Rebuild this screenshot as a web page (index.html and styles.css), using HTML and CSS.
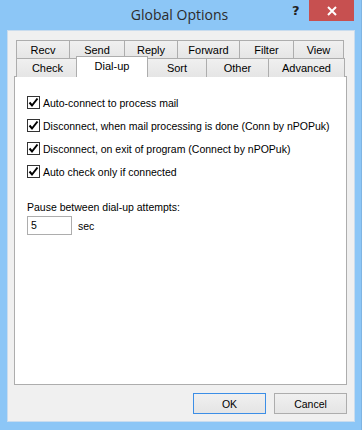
FILE: index.html
```html
<!DOCTYPE html>
<html lang="en">
<head>
    <meta charset="UTF-8">
    <meta name="viewport" content="width=device-width, initial-scale=1.0">
    <title>Global Options</title>
    <link rel="stylesheet" href="styles.css">
</head>
<body>
    <div class="window">
        <div class="titlebar">
            <div class="title">Global Options</div>
            <div class="help">?</div>
            <div class="close">
                <svg width="12" height="10" viewBox="0 0 12 10">
                    <path d="M2 1 L10 9 M10 1 L2 9" stroke="#fff" stroke-width="2"/>
                </svg>
            </div>
        </div>

        <div class="client">
            <div class="tabs">
                <div class="tab-row back">
                    <div class="tab w53">Recv</div>
                    <div class="tab w55">Send</div>
                    <div class="tab w53">Reply</div>
                    <div class="tab w62">Forward</div>
                    <div class="tab w54">Filter</div>
                    <div class="tab w50">View</div>
                </div>
                <div class="tab-row front">
                    <div class="tab w62">Check</div>
                    <div class="tab w67 active">Dial-up</div>
                    <div class="tab w59">Sort</div>
                    <div class="tab w62">Other</div>
                    <div class="tab w77">Advanced</div>
                </div>
            </div>

            <div class="panel">
                <label class="check-row">
                    <span class="box"><svg width="11" height="11" viewBox="0 0 11 11"><path d="M1.5 5.5 L4 8.5 L9.5 1.5" fill="none" stroke="#000" stroke-width="2"/></svg></span>
                    <span>Auto-connect to process mail</span>
                </label>
                <label class="check-row">
                    <span class="box"><svg width="11" height="11" viewBox="0 0 11 11"><path d="M1.5 5.5 L4 8.5 L9.5 1.5" fill="none" stroke="#000" stroke-width="2"/></svg></span>
                    <span>Disconnect, when mail processing is done (Conn by nPOPuk)</span>
                </label>
                <label class="check-row">
                    <span class="box"><svg width="11" height="11" viewBox="0 0 11 11"><path d="M1.5 5.5 L4 8.5 L9.5 1.5" fill="none" stroke="#000" stroke-width="2"/></svg></span>
                    <span>Disconnect, on exit of program (Connect by nPOPuk)</span>
                </label>
                <label class="check-row">
                    <span class="box"><svg width="11" height="11" viewBox="0 0 11 11"><path d="M1.5 5.5 L4 8.5 L9.5 1.5" fill="none" stroke="#000" stroke-width="2"/></svg></span>
                    <span>Auto check only if connected</span>
                </label>

                <div class="pause-label">Pause between dial-up attempts:</div>
                <div class="pause-row">
                    <div class="field">5</div>
                    <span>sec</span>
                </div>
            </div>

            <div class="buttons">
                <button class="btn default">OK</button>
                <button class="btn">Cancel</button>
            </div>
        </div>
    </div>
</body>
</html>
```

FILE: styles.css
```css
:root {
    --frame: #8cc6f6;
    --face: #f0f0f0;
    --line: #adadad;
    --text: #000;
}

body {
    margin: 0;
    padding: 0;
    background: var(--frame);
    font-family: 'Liberation Sans', Arial, sans-serif;
    font-size: 11px;
    color: var(--text);
}

.window {
    width: 362px;
    height: 430px;
    box-sizing: border-box;
    border-right: 1px solid #7fb4e2;
}

.titlebar {
    height: 30px;
    display: flex;
    align-items: flex-start;
}

.title {
    flex: 1;
    padding-left: 67px;
    text-align: center;
    font-family: 'Open Sans', sans-serif;
    font-size: 14px;
    line-height: 30px;
    color: #2b2b2b;
}

.help {
    width: 10px;
    font-family: 'DejaVu Sans', sans-serif;
    font-weight: bold;
    font-size: 13px;
    line-height: 21px;
    color: #222;
    margin-right: 7px;
}

.close {
    width: 45px;
    height: 21px;
    background: #c75050;
    display: flex;
    align-items: center;
    justify-content: center;
    margin-right: 7px;
}

.client {
    margin-left: 7px;
    width: 348px;
    height: 392px;
    box-sizing: border-box;
    background: var(--face);
    border: 1px solid #c9dcee;
    padding: 9px 0 0 6px;
}

.tabs {
    padding-left: 2px;
}

.tab-row {
    display: flex;
    height: 18px;
}

.tab {
    box-sizing: border-box;
    height: 19px;
    border: 1px solid var(--line);
    border-bottom: none;
    margin-right: -1px;
    background: linear-gradient(#f0f0f0, #e5e5e5);
    text-align: center;
    line-height: 19px;
}

.tab:last-child {
    margin-right: 0;
}

.tab.active {
    position: relative;
    z-index: 1;
    background: #fff;
    height: 21px;
    margin: -2px -2px 0 -2px;
    padding: 0 2px;
    line-height: 19px;
}

.active + .tab {
    margin-left: 1px;
}

.w50 { width: 51px; }
.w53 { width: 54px; }
.w54 { width: 55px; }
.w55 { width: 56px; }
.w59 { width: 60px; }
.w62 { width: 63px; }
.w67 { width: 72px; }
.w77 { width: 77px; }

.panel {
    width: 333px;
    height: 309px;
    box-sizing: border-box;
    background: #fff;
    border: 1px solid var(--line);
    padding: 19px 0 0 12px;
    font-size: 10.5px;
}

.check-row {
    display: flex;
    align-items: center;
    gap: 3px;
    height: 13px;
    margin-bottom: 10px;
    white-space: nowrap;
}

.box {
    flex: none;
    width: 13px;
    height: 13px;
    box-sizing: border-box;
    border: 1px solid #333;
    display: flex;
    align-items: center;
    justify-content: center;
}

.pause-label {
    margin-top: 23px;
    line-height: 13px;
}

.pause-row {
    display: flex;
    align-items: center;
    gap: 6px;
    margin-top: 2px;
}

.field {
    width: 45px;
    height: 19px;
    box-sizing: border-box;
    border: 1px solid var(--line);
    padding-left: 3px;
    line-height: 16px;
}

.buttons {
    display: flex;
    justify-content: flex-end;
    gap: 8px;
    margin-top: 8px;
    width: 333px;
}

.btn {
    width: 73px;
    height: 21px;
    box-sizing: border-box;
    border: 1px solid var(--line);
    background: linear-gradient(#f0f0f0, #e5e5e5);
    font-family: inherit;
    font-size: 10.5px;
    color: var(--text);
    padding: 0;
}

.btn.default {
    border-color: #3c8ee6;
}
```
